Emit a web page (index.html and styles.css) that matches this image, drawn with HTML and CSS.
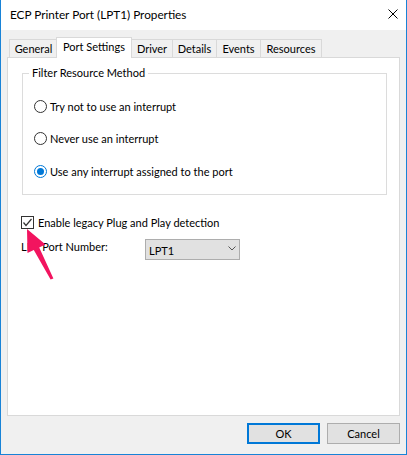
FILE: index.html
```html
<!DOCTYPE html>
<html>
<head>
<meta charset="utf-8">
<link rel="stylesheet" href="styles.css">
</head>
<body>
<div class="window">
  <div class="titlebar">
    <span class="title">ECP Printer Port (LPT1) Properties</span>
    <svg class="close" width="10" height="10" viewBox="0 0 10 10"><path d="M0.5 0.5 L9.5 9.5 M9.5 0.5 L0.5 9.5" stroke="#000" stroke-width="1" fill="none"/></svg>
  </div>
  <div class="content">
    <div class="tabs">
      <div class="tab t-general">General</div>
      <div class="tab t-port selected">Port Settings</div>
      <div class="tab t-driver">Driver</div>
      <div class="tab t-details">Details</div>
      <div class="tab t-events">Events</div>
      <div class="tab t-resources">Resources</div>
    </div>
    <div class="panel">
      <fieldset class="group">
        <legend>Filter Resource Method</legend>
        <div class="radios">
          <div class="opt"><span class="radio"></span><span>Try not to use an interrupt</span></div>
          <div class="opt"><span class="radio"></span><span>Never use an interrupt</span></div>
          <div class="opt"><span class="radio on"></span><span>Use any interrupt assigned to the port</span></div>
        </div>
      </fieldset>
      <div class="check-row">
        <span class="checkbox"><svg width="11" height="11" viewBox="0 0 11 11"><path d="M1.5 5.5 L4 8.5 L9.5 2" stroke="#333" stroke-width="1.2" fill="none"/></svg></span>
        <span>Enable legacy Plug and Play detection</span>
      </div>
      <div class="port-row">
        <span class="port-label">LPT Port Number:</span>
        <div class="select">
          <span>LPT1</span>
          <svg width="8" height="5" viewBox="0 0 8 5"><path d="M0.5 0.5 L4 4 L7.5 0.5" stroke="#555" stroke-width="1" fill="none"/></svg>
        </div>
      </div>
    </div>
    <div class="buttons">
      <button class="btn default">OK</button>
      <button class="btn">Cancel</button>
    </div>
  </div>
  <svg class="arrow" width="407" height="455" viewBox="0 0 407 455">
    <polygon points="27,229 45.5,244.5 39.2,247.5 53.4,278.4 50.6,279.6 33.8,250.1 27.5,253.1" fill="#f2145f"/>
  </svg>
</div>
</body>
</html>
```
FILE: styles.css
```css
html, body {
  margin: 0;
  padding: 0;
}
body {
  width: 407px;
  height: 455px;
  background: #f0f0f0;
  font-family: Lato, "Segoe UI", sans-serif;
  font-size: 11px;
  color: #000;
  overflow: hidden;
}
.window {
  position: relative;
  width: 407px;
  height: 455px;
  box-sizing: border-box;
  border-left: 1px solid #1883d7;
  border-right: 1px solid #1883d7;
  border-bottom: 1px solid #1883d7;
  background: #f0f0f0;
  display: flex;
  flex-direction: column;
}
.titlebar {
  height: 30px;
  background: #fff;
  display: flex;
  align-items: center;
  justify-content: space-between;
  padding: 0 8px 0 9px;
  box-sizing: border-box;
}
.title {
  font-size: 11.75px;
  line-height: 16px;
  margin-top: -1px;
}
.close {
  display: block;
  margin-top: -2px;
}
.content {
  padding: 0 6px;
}
.tabs {
  display: flex;
  align-items: flex-end;
  height: 20px;
  margin-top: 7px;
  padding-left: 2px;
}
.tab {
  box-sizing: border-box;
  height: 18px;
  border: 1px solid #d9d9d9;
  border-bottom: none;
  background: #f0f0f0;
  text-align: center;
  line-height: 16px;
  padding-top: 1px;
  margin-left: -1px;
}
.tab:first-child {
  margin-left: 0;
}
.tab.selected {
  height: 21px;
  margin-bottom: -1px;
  background: #fff;
  position: relative;
  z-index: 1;
  padding-top: 1px;
}
.t-general { width: 49px; }
.t-port { width: 76px; margin-left: -2px; }
.t-driver { width: 42px; }
.t-details { width: 45px; }
.t-events { width: 45px; }
.t-resources { width: 62px; }
.panel {
  height: 359px;
  box-sizing: border-box;
  border: 1px solid #d9d9d9;
  background: #fff;
  display: flex;
  flex-direction: column;
  align-items: flex-start;
}
.group {
  margin: 7px 0 0 14px;
  width: 365px;
  box-sizing: border-box;
  border: 1px solid #dcdcdc;
  padding: 0;
  min-width: 0;
}
.group legend {
  margin-left: 6px;
  padding: 0 3px;
  line-height: 16px;
}
.radios {
  display: flex;
  flex-direction: column;
  gap: 16.5px;
  padding: 17px 0 15px 11px;
}
.opt {
  display: flex;
  align-items: center;
  height: 16px;
  gap: 3px;
}
.radio {
  width: 13px;
  height: 13px;
  box-sizing: border-box;
  border: 1px solid #333;
  border-radius: 50%;
  background: #fff;
  display: flex;
  align-items: center;
  justify-content: center;
}
.radio.on {
  border-color: #0078d7;
}
.radio.on::after {
  content: "";
  width: 7px;
  height: 7px;
  border-radius: 50%;
  background: #0078d7;
}
.check-row {
  display: flex;
  align-items: center;
  height: 16px;
  gap: 4px;
  margin: 19px 0 0 13px;
}
.checkbox {
  width: 13px;
  height: 13px;
  box-sizing: border-box;
  border: 1px solid #333;
  background: #fff;
  display: flex;
  align-items: center;
  justify-content: center;
}
.checkbox svg {
  display: block;
}
.port-row {
  display: flex;
  align-items: flex-start;
  margin: 9px 0 0 13px;
}
.port-label {
  width: 124px;
  line-height: 16px;
  margin-top: 0px;
}
.select {
  width: 95px;
  height: 21px;
  box-sizing: border-box;
  border: 1px solid #adadad;
  background: #e1e1e1;
  display: flex;
  align-items: center;
  justify-content: space-between;
  padding: 1px 3px 0 3px;
}
.select svg {
  display: block;
  margin-top: -3px;
}
.buttons {
  display: flex;
  justify-content: flex-end;
  gap: 7px;
  margin-top: 7px;
}
.btn {
  width: 73px;
  height: 21px;
  box-sizing: border-box;
  border: 1px solid #adadad;
  background: #e1e1e1;
  font-family: Lato, "Segoe UI", sans-serif;
  font-size: 11px;
  color: #000;
  padding: 0;
  line-height: 16px;
}
.btn.default {
  border: 2px solid #0078d7;
}
.arrow {
  position: absolute;
  left: -1px;
  top: 0;
  pointer-events: none;
}
```
